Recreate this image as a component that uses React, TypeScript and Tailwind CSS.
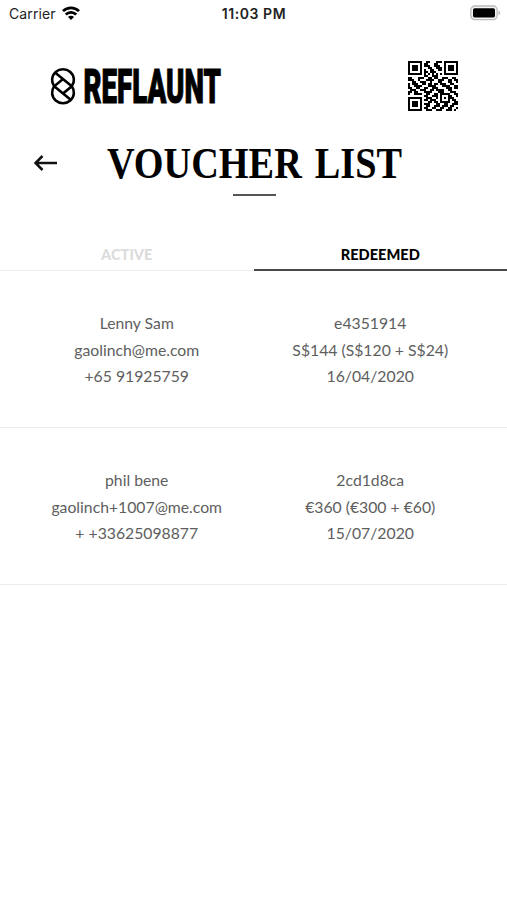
import React from "react";

const QR_ROWS = [
  "1111111001100011101111111",
  "1000001011000110001000001",
  "1011101011100111001011101",
  "1011101000110011101011101",
  "1011101010011001101011101",
  "1000001011011100001000001",
  "1111111010101010101111111",
  "0000000011001110000000000",
  "1100011100110110011100110",
  "1110010001111001110011011",
  "0011001110010001100011001",
  "1011100110110110111001100",
  "1001111000111100011110011",
  "1100110011001110000111011",
  "0111001110011011110011000",
  "1101100011110001110001110",
  "1001111001100110111110011",
  "0000000011001110100011001",
  "1111111001110010101011100",
  "1000001011011100100010110",
  "1011101000110110111110011",
  "1011101011100011001100111",
  "1011101001100111011101100",
  "1000001011001100110011001",
  "1111111001110011100111010",
];

type Voucher = { customer: string[]; details: string[] };

const VOUCHERS: Voucher[] = [
  {
    customer: ["Lenny Sam", "gaolinch@me.com", "+65 91925759"],
    details: ["e4351914", "S$144 (S$120 + S$24)", "16/04/2020"],
  },
  {
    customer: ["phil bene", "gaolinch+1007@me.com", "+ +33625098877"],
    details: ["2cd1d8ca", "€360 (€300 + €60)", "15/07/2020"],
  },
];

function StatusBar() {
  return (
    <div className="grid h-[26px] grid-cols-3 items-center pl-[9px] pr-[6px] font-['Inter',sans-serif] text-[14px] text-[#222]">
      <div className="flex items-center gap-[6px]">
        <span className="tracking-[0.1px]">Carrier</span>
        <svg width="18" height="14" viewBox="0 0 18 14" fill="none" stroke="#000" strokeWidth="2.7">
          <path d="M1 5.1a11.5 11.5 0 0 1 16 0" />
          <path d="M3.8 8.5a7.4 7.4 0 0 1 10.4 0" />
          <path d="M6 10.9a4.2 4.2 0 0 1 6 0L9 13.9Z" fill="#000" stroke="none" />
        </svg>
      </div>
      <span className="-ml-0.5 whitespace-nowrap text-center font-semibold tracking-[0.55px]">11:03 PM</span>
      <svg className="justify-self-end" width="31" height="16" viewBox="0 0 31 16">
        <rect x=".8" y="1" width="26.4" height="13.6" rx="4" fill="#f4f4f4" stroke="#bbb" strokeWidth="1.3" />
        <rect x="3" y="3.2" width="22" height="9.2" rx="1.6" fill="#000" />
        <path d="M28.5 5.5c2.2.8 2.2 3.8 0 4.6Z" fill="#bbb" />
      </svg>
    </div>
  );
}

function Logo() {
  return (
    <svg className="overflow-visible" width="176" height="42" viewBox="0 0 176 42" aria-label="Reflaunt">
      <g fill="none" stroke="#000" strokeWidth="2.6">
        <path d="M5.2 20.3A10.9 10.7 0 1 1 22.8 20.3L14 27.6" />
        <path d="M22.8 20.3A10.9 10.7 0 1 1 5.2 20.3L14 13" />
        <path d="M6.3 6.8L22.8 20.3M5.2 20.3L21.7 33.8" />
      </g>
      <text
        x="34.5"
        y="37.4"
        textLength="137.5"
        lengthAdjust="spacingAndGlyphs"
        className="fill-black stroke-black font-['Roboto',sans-serif] text-[49px] font-black"
        strokeWidth="1.1"
      >
        REFLAUNT
      </text>
    </svg>
  );
}

function QrCode() {
  return (
    <svg width="50" height="50" viewBox="0 0 25 25" shapeRendering="crispEdges">
      {QR_ROWS.map((row, y) =>
        row.split("").map((cell, x) =>
          cell === "1" ? <rect key={x + "-" + y} x={x} y={y} width="1" height="1" /> : null
        )
      )}
    </svg>
  );
}

function Lines({ items }: { items: string[] }) {
  return (
    <div className="pt-[2px] text-center">
      {items.map((line) => (
        <p key={line}>{line}</p>
      ))}
    </div>
  );
}

export default function App() {
  return (
    <div className="min-h-[900px] w-full bg-white font-['Lato',sans-serif]">
      <StatusBar />
      <header className="flex h-[86px] items-end justify-between pl-[49px] pr-[49px]">
        <div className="pb-1">
          <Logo />
        </div>
        <div className="pb-px">
          <QrCode />
        </div>
      </header>

      <div className="grid h-[84px] grid-cols-[106px_297px_1fr] pt-[28px]">
        <svg className="ml-[34px] mt-[14px]" width="24" height="18" viewBox="0 0 24 18" fill="none" stroke="#111" strokeWidth="2.5">
          <path d="M23 9H1.5M8.5 2L1.5 9L8.5 16" />
        </svg>
        <div className="flex flex-col items-center">
          <h1 className="h-[54px]">
            <svg className="overflow-visible" width="297" height="50">
              <text
                x="1"
                y="37.5"
                textLength="295"
                lengthAdjust="spacingAndGlyphs"
                className="fill-black font-['Liberation_Serif',serif] text-[44px] font-bold [word-spacing:4px]"
              >
                VOUCHER LIST
              </text>
            </svg>
          </h1>
          <div className="h-[2px] w-[43px] shrink-0 bg-[#555]" />
        </div>
      </div>

      <nav className="mt-[43px] grid h-8 grid-cols-2 text-center text-[14.6px] font-black leading-[31px]">
        <div className="h-8 border-b border-[#f0f0f0] text-[#dcdcdc]">ACTIVE</div>
        <div className="h-8 border-b-2 border-[#484a4a] text-black">REDEEMED</div>
      </nav>

      <main className="text-[15.75px] leading-[26.8px] text-[#5e5e5e]">
        {VOUCHERS.map((voucher) => (
          <div key={voucher.details[0]} className="grid h-[157px] grid-cols-2 items-center border-b border-[#ececec] px-5">
            <Lines items={voucher.customer} />
            <Lines items={voucher.details} />
          </div>
        ))}
      </main>
    </div>
  );
}
